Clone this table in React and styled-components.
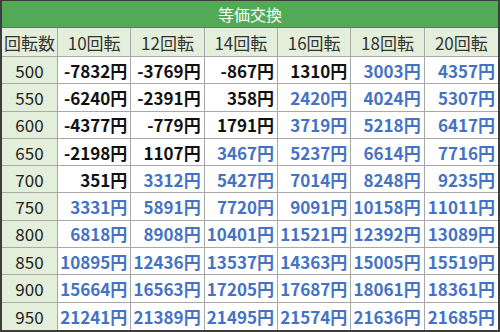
import React from "react";
import styled, { createGlobalStyle } from "styled-components";

const Global = createGlobalStyle`
  html, body { margin: 0; padding: 0; background: #fff; }
  body { font-family: "Noto Sans CJK JP", "Noto Sans", sans-serif; }
`;

const Frame = styled.div`
  width: 500px;
  height: 332px;
  box-sizing: border-box;
  border: 2px solid #3d3d3d;
  border-top-width: 1px;
  display: grid;
  grid-template-rows: 27px 1fr;
  background: #fff;
`;

const Title = styled.div`
  background: #52aa57;
  color: #fff;
  font-size: 16px;
  display: flex;
  align-items: center;
  justify-content: center;
  border-bottom: 1px solid #5b7f5c;
  letter-spacing: 0px;
`;

const Grid = styled.div`
  display: grid;
  grid-template-columns: 56px repeat(6, 1fr);
  grid-template-rows: 29px repeat(10, 1fr);
`;

const Cell = styled.div`
  display: flex;
  align-items: center;
  box-sizing: border-box;
  border-right: ${(p) => (p.$last ? "none" : "1px solid #a8a8a8")};
  border-bottom: ${(p) => (p.$bottom ? "none" : "1px solid #a8a8a8")};
  font-size: 17px;
  line-height: 1;
  white-space: nowrap;
`;

const HeadCell = styled(Cell)`
  background: #e3eedb;
  color: #333;
  justify-content: center;
`;

const SpinCell = styled(Cell)`
  background: #e3eedb;
  color: #222;
  justify-content: center;
`;

const ValueCell = styled(Cell)`
  justify-content: flex-end;
  padding-right: 3px;
  font-weight: 700;
  color: ${(p) => (p.$blue ? "#4472c4" : "#111")};
`;

const cols = ["10回転", "12回転", "14回転", "16回転", "18回転", "20回転"];

const rows = [
  [500, [-7832, -3769, -867, 1310, 3003, 4357]],
  [550, [-6240, -2391, 358, 2420, 4024, 5307]],
  [600, [-4377, -779, 1791, 3719, 5218, 6417]],
  [650, [-2198, 1107, 3467, 5237, 6614, 7716]],
  [700, [351, 3312, 5427, 7014, 8248, 9235]],
  [750, [3331, 5891, 7720, 9091, 10158, 11011]],
  [800, [6818, 8908, 10401, 11521, 12392, 13089]],
  [850, [10895, 12436, 13537, 14363, 15005, 15519]],
  [900, [15664, 16563, 17205, 17687, 18061, 18361]],
  [950, [21241, 21389, 21495, 21574, 21636, 21685]],
];

export default function App() {
  return (
    <>
      <Global />
      <Frame>
        <Title>等価交換</Title>
        <Grid>
          <HeadCell>回転数</HeadCell>
          {cols.map((c, i) => (
            <HeadCell key={c} $last={i === cols.length - 1}>
              {c}
            </HeadCell>
          ))}
          {rows.map(([spin, vals], ri) => {
            const bottom = ri === rows.length - 1;
            return (
              <React.Fragment key={spin}>
                <SpinCell $bottom={bottom}>{spin}</SpinCell>
                {vals.map((v, i) => (
                  <ValueCell
                    key={i}
                    $blue={v >= 2000}
                    $last={i === vals.length - 1}
                    $bottom={bottom}
                  >
                    {v}円
                  </ValueCell>
                ))}
              </React.Fragment>
            );
          })}
        </Grid>
      </Frame>
    </>
  );
}
